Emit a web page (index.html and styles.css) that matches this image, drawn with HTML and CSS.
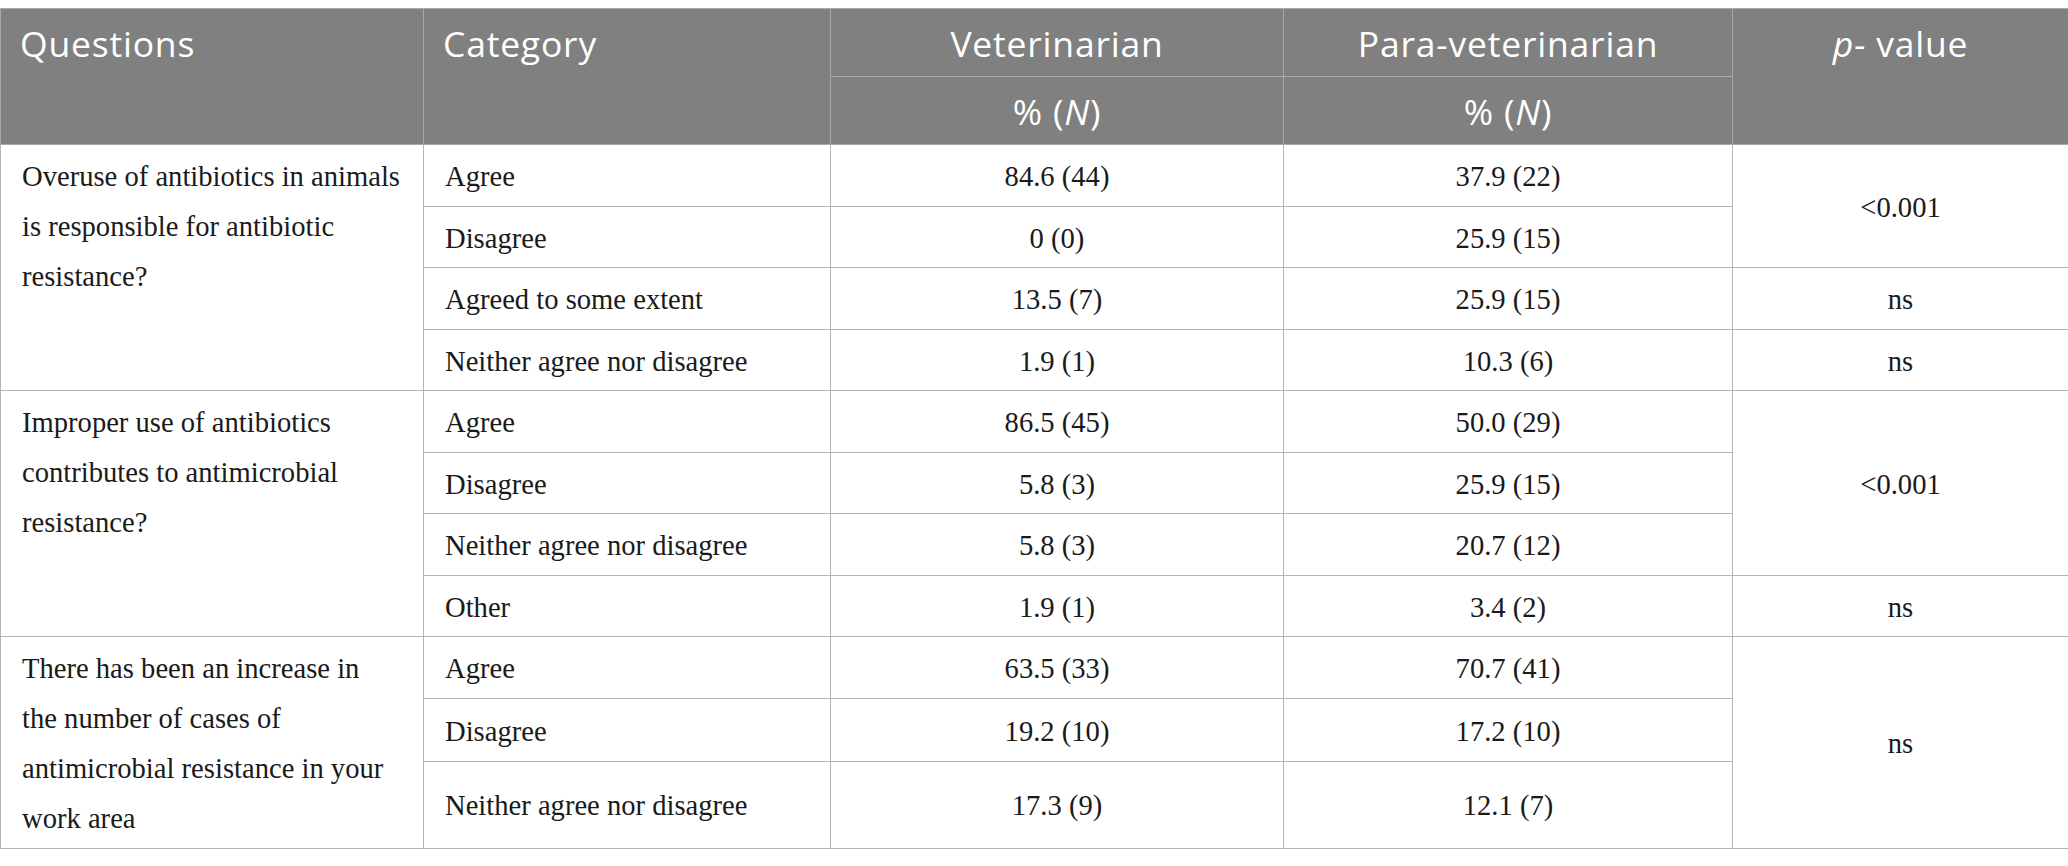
FILE: index.html
```html
<!DOCTYPE html>
<html lang="en">
<head>
  <meta charset="UTF-8">
  <title>Antimicrobial resistance – perceptions</title>
  <link rel="stylesheet" href="styles.css">
</head>
<body>
  <table class="tabela">
    <colgroup>
      <col class="c-questao">
      <col class="c-categoria">
      <col class="c-vet">
      <col class="c-para">
      <col class="c-p">
    </colgroup>
    <thead>
      <tr>
        <th rowspan="2" class="esq">Questions</th>
        <th rowspan="2" class="esq">Category</th>
        <th>Veterinarian</th>
        <th>Para-veterinarian</th>
        <th rowspan="2"><i>p</i>- value</th>
      </tr>
      <tr>
        <th>% (<i>N</i>)</th>
        <th>% (<i>N</i>)</th>
      </tr>
    </thead>
    <tbody>
      <tr>
        <td rowspan="4" class="questao">Overuse of antibiotics in animals is responsible for antibiotic resistance?</td>
        <td class="esq">Agree</td>
        <td>84.6 (44)</td>
        <td>37.9 (22)</td>
        <td rowspan="2">&lt;0.001</td>
      </tr>
      <tr>
        <td class="esq">Disagree</td>
        <td>0 (0)</td>
        <td>25.9 (15)</td>
      </tr>
      <tr>
        <td class="esq">Agreed to some extent</td>
        <td>13.5 (7)</td>
        <td>25.9 (15)</td>
        <td>ns</td>
      </tr>
      <tr>
        <td class="esq">Neither agree nor disagree</td>
        <td>1.9 (1)</td>
        <td>10.3 (6)</td>
        <td>ns</td>
      </tr>

      <tr>
        <td rowspan="4" class="questao">Improper use of antibiotics contributes to antimicrobial resistance?</td>
        <td class="esq">Agree</td>
        <td>86.5 (45)</td>
        <td>50.0 (29)</td>
        <td rowspan="3">&lt;0.001</td>
      </tr>
      <tr>
        <td class="esq">Disagree</td>
        <td>5.8 (3)</td>
        <td>25.9 (15)</td>
      </tr>
      <tr>
        <td class="esq">Neither agree nor disagree</td>
        <td>5.8 (3)</td>
        <td>20.7 (12)</td>
      </tr>
      <tr>
        <td class="esq">Other</td>
        <td>1.9 (1)</td>
        <td>3.4 (2)</td>
        <td>ns</td>
      </tr>

      <tr>
        <td rowspan="3" class="questao">There has been an increase in<br>the number of cases of antimicrobial resistance in your work area</td>
        <td class="esq">Agree</td>
        <td>63.5 (33)</td>
        <td>70.7 (41)</td>
        <td rowspan="3">ns</td>
      </tr>
      <tr>
        <td class="esq">Disagree</td>
        <td>19.2 (10)</td>
        <td>17.2 (10)</td>
      </tr>
      <tr class="linha-alta">
        <td class="esq">Neither agree nor disagree</td>
        <td>17.3 (9)</td>
        <td>12.1 (7)</td>
      </tr>
    </tbody>
  </table>
</body>
</html>
```

FILE: styles.css
```css
* {
  box-sizing: border-box;
}

body {
  margin: 8px 0 0 0;
  background: #ffffff;
  color: #1a1a1a;
  font-family: "Liberation Serif", "Times New Roman", serif;
}

.tabela {
  width: 2068px;
  table-layout: fixed;
  border-collapse: collapse;
  border: 1px solid #b5b5b5;
}

.c-questao { width: 423px; }
.c-categoria { width: 407px; }
.c-vet { width: 453px; }
.c-para { width: 449px; }
.c-p { width: 336px; }

th {
  background: #808080;
  color: #ffffff;
  font-family: "Open Sans", "Noto Sans", sans-serif;
  font-weight: 400;
  font-size: 35.5px;
  letter-spacing: 0.8px;
  line-height: 52px;
  padding: 8px 22px 7px;
  text-align: center;
  vertical-align: top;
  border: 1px solid #a9a9a9;
}

th.esq {
  text-align: left;
  padding-left: 19px;
}

td {
  font-size: 28.6px;
  line-height: 50px;
  padding: 7px 21px 3.5px;
  text-align: center;
  vertical-align: middle;
  border: 1px solid #b5b5b5;
}

td.esq {
  text-align: left;
}

td.questao {
  text-align: left;
  vertical-align: top;
}

.linha-alta {
  height: 87px;
}
```
